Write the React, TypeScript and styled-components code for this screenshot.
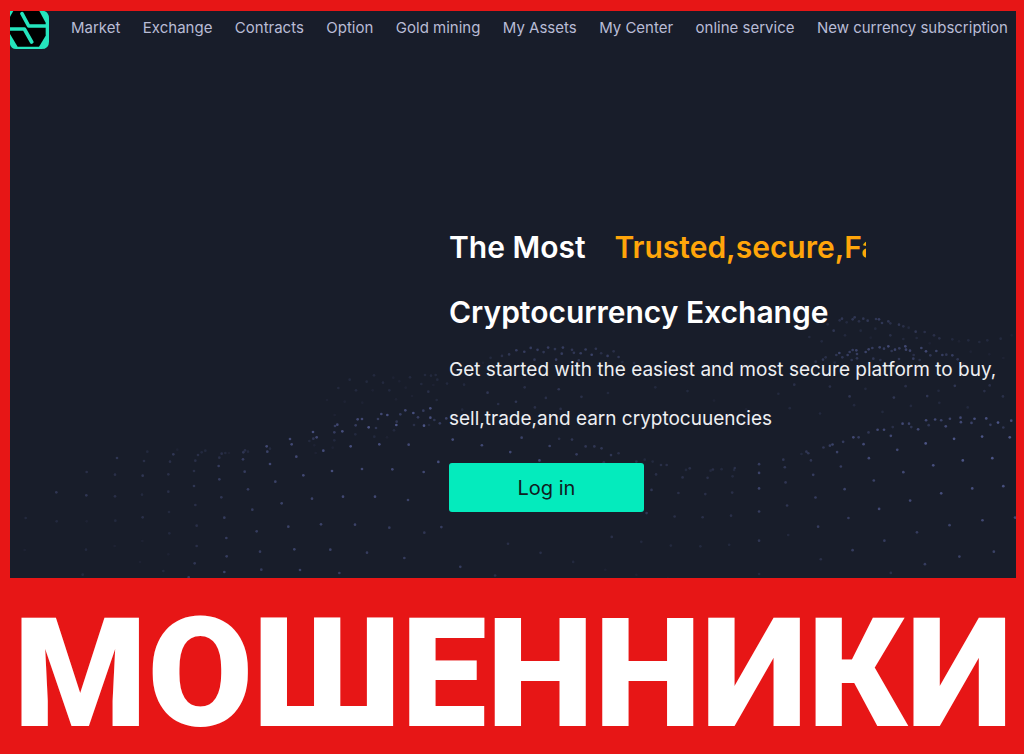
import React from "react";
import styled, { createGlobalStyle } from "styled-components";

const GlobalStyle = createGlobalStyle`
  * { box-sizing: border-box; }
  body {
    margin: 0;
    background: #e71616;
    font-family: Inter, "Noto Sans", sans-serif;
  }
`;

const Page = styled.div`
  display: flex;
  flex-direction: column;
  min-height: 100vh;
  padding: 11px 8px 0 10px;
  background: #e71616;
`;

const Screen = styled.main`
  position: relative;
  overflow: hidden;
  background: #181d2a;
  padding-bottom: 66px;
`;

const Backdrop = styled.svg`
  position: absolute;
  inset: 0;
  width: 100%;
  height: 100%;
  fill: #6670b4;
`;

const Header = styled.header`
  position: relative;
  display: flex;
  align-items: flex-start;
  gap: 22px;
  padding-right: 8px;
`;

const Logo = styled.svg`
  flex: none;
  width: 39px;
  height: 38px;
`;

const Nav = styled.nav`
  flex: 1;
  display: flex;
  justify-content: space-between;
  padding-top: 7px;
`;

const NavLink = styled.a`
  color: #b9bcd6;
  font-size: 15px;
  line-height: 20px;
  text-decoration: none;
  white-space: nowrap;
`;

const Hero = styled.section`
  position: relative;
  display: grid;
  grid-template-columns: 439fr 567fr;
  padding-top: 166px;
`;

const Copy = styled.div`
  grid-column: 2;
`;

const Title = styled.h1`
  margin: 0;
  color: #fff;
  font-size: 30px;
  font-weight: 600;
  line-height: 65px;
`;

const TitleLine = styled.span`
  display: flex;
  gap: 29px;
  white-space: nowrap;
`;

const Typed = styled.span`
  width: 252px;
  overflow: hidden;
  color: #ffa50a;
`;

const Lead = styled.p`
  margin: 0;
  color: #eeeff2;
  font-size: 19px;
  line-height: 49px;
`;

const LoginButton = styled.button`
  display: block;
  width: 195px;
  height: 49px;
  margin-top: 20px;
  border: 0;
  border-radius: 3px;
  background: #04ebbd;
  color: #10201f;
  font: 400 20px/24px Inter, sans-serif;
`;

const Banner = styled.footer`
  flex: 1;
  display: flex;
  align-items: center;
  justify-content: center;
  padding-top: 16px;
  color: #fff;
  font-family: Roboto, sans-serif;
  font-size: 153px;
  font-weight: 900;
  line-height: 152px;
  white-space: nowrap;
`;

const links = [
  "Market", "Exchange", "Contracts", "Option", "Gold mining",
  "My Assets", "My Center", "online service", "New currency subscription",
];

type Dot = [number, number, number];

// Each dot is x, y and brightness from 1 to 9, in its field's own units.
const leftDots: Dot[] = [
  [351,354,4],[442,335,2],[532,329,1],[520,343,4],[510,365,3],[432,363,3],[260,396,3],[345,404,3],[428,407,4],[505,403,3],
  [169,457,4],[259,466,4],[345,469,3],[426,464,2],[505,455,3],[77,534,2],[170,544,2],[260,544,1],[346,542,2],[428,532,3],
  [507,516,2],[508,580,2],[427,603,1],[344,618,1],[258,629,2],[74,630,1],[505,643,1],[420,666,1],[490,693,2],[248,704,2],
  [616,332,2],[605,337,2],[594,345,3],[586,362,3],[582,393,3],[582,438,4],[586,495,3],[590,557,3],[590,618,3],[584,670,4],[566,712,5],
  [665,341,3],[676,339,2],[687,339,1],[658,353,3],[656,378,5],[658,418,5],[664,472,4],[673,533,5],[679,594,5],[680,649,5],[673,696,6],
  [735,331,3],[730,337,4],[744,335,2],[729,358,5],[734,395,5],[744,448,5],[757,509,5],[770,574,5],[780,635,5],[784,689,5],
  [800,319,7],[810,326,2],[802,335,6],[810,372,7],[826,425,6],[845,490,6],[865,560,6],[883,628,6],[900,690,6],[1018,699,5],
  [870,297,7],[875,313,7],[889,350,7],[910,406,7],[936,476,6],[963,553,6],[991,629,6],
  [939,276,8],[950,292,7],[940,296,4],[970,332,8],[996,393,8],[1029,470,7],[1065,554,6],[1101,638,5],
  [1012,254,7],[1005,258,5],[1003,277,5],[1027,274,8],[1052,319,8],[1086,387,7],[1125,470,7],[1168,563,5],[1213,654,5],
  [1073,238,7],[1086,237,7],[1067,256,5],[1106,262,9],[1066,283,2],[1138,313,8],[1177,388,7],[1224,480,6],[1273,578,4],
  [1144,222,7],[1162,225,8],[1134,237,5],[1128,264,4],[1123,290,2],[1189,255,9],[1190,245,4],[1182,271,2],[1226,314,7],[1271,396,7],
  [1216,211,7],[1201,223,5],[1240,219,8],[1254,232,5],[1242,255,3],[1272,257,9],[1270,212,5],[1291,205,8],[1303,240,4],
  [1015,144,2],[1049,119,2],[1068,151,2],[1087,188,1],[1100,125,2],[1122,106,2],[1149,128,2],[1118,151,1],[1168,151,2],[1180,113,1],
  [1198,124,1],[1217,143,1],[1230,112,2],[1264,132,2],[1275,105,2],[1293,107,2],[1307,105,2],[1285,155,3],[1188,178,1],[1236,168,1],
  [1310,180,2],[1312,119,2],[1300,135,1],[981,180,1],[1034,185,1],[1004,225,1],[943,316,1],[928,303,2],[1003,301,2],[1161,292,1],[1287,255,2],[998,323,1],[947,339,1],
];

const rightDots: Dot[] = [
  [1,205,8],[43,207,6],[26,220,5],[68,205,4],[60,263,8],[137,278,7],[22,322,8],[102,336,7],[183,355,6],[212,296,7],[289,318,7],[365,341,5],[439,362,5],
  [242,258,6],[316,280,6],[387,302,5],[341,261,3],[375,263,4],[411,281,4],[434,281,4],[453,286,4],[478,304,4],[498,299,3],[459,323,3],[529,341,4],
  [545,321,3],[567,316,2],[588,321,2],[610,330,3],[625,330,3],[597,355,3],[667,363,3],[676,343,2],[686,339,3],[733,364,3],[741,345,2],[747,342,3],[770,341,2],
  [803,343,2],[805,338,3],[799,360,2],[585,396,4],[656,404,3],[727,407,3],[798,403,3],[572,457,4],[646,466,3],[720,468,3],[795,464,3],
  [480,520,3],[558,533,2],[636,543,2],[714,545,2],[790,541,2],[869,328,5],[869,351,6],[869,392,6],[869,453,5],[869,530,4],[869,618,2],
  [933,316,4],[937,336,4],[939,376,4],[943,437,4],[946,515,2],[981,301,2],[994,295,4],[999,299,4],[1006,318,4],[1012,356,5],[1018,416,5],[1025,493,5],[1032,579,3],
  [1039,284,4],[1056,279,5],[1063,276,6],[1075,296,6],[1085,334,5],[1095,394,6],[1105,470,5],[1116,555,5],[1128,640,2],
  [1091,269,5],[1118,257,7],[1132,257,5],[1145,275,7],[1159,312,7],[1172,371,6],[1186,446,7],[1200,530,5],[1217,615,3],[1238,692,3],
  [1158,244,4],[1182,237,7],[1199,237,7],[1217,253,7],[1234,290,7],[1250,349,7],[1268,424,7],[1286,508,5],[1307,592,5],[1333,669,5],
  [1222,230,3],[1248,221,7],[1265,221,6],[1271,230,4],[1289,236,7],[1309,273,9],[1329,331,8],[1350,405,8],[1372,489,6],[1398,572,6],[1430,649,5],[1471,710,5],
  [1310,212,7],[1317,225,4],[1334,210,7],[1350,212,6],[1362,228,7],[1384,261,9],[1407,318,9],[1432,392,8],[1459,476,7],[1489,559,6],[1526,634,6],
  [1373,208,6],[1401,205,7],[1402,217,7],[1438,208,8],[1430,219,6],[1469,207,8],[1458,255,9],[1485,312,9],[1514,386,8],[1545,469,7],
  [1480,224,5],[1500,218,9],[1514,231,4],[1535,213,8],[1531,257,9],[206,538,3],[292,562,3],[378,586,2],[463,607,1],[30,494,5],[80,599,5],[172,622,3],[264,647,2],[32,675,4],[130,699,3],[545,620,1],[628,630,1],
  [209,38,4],[228,27,5],[249,31,5],[266,21,5],[284,26,5],[300,32,4],[312,20,5],[330,24,4],[351,20,5],[348,36,5],[375,26,4],[380,34,4],[398,35,5],
  [411,25,5],[427,39,6],[438,23,4],[452,35,3],[469,42,5],[485,30,3],[498,45,4],[508,58,2],[539,61,2],[276,52,4],[333,52,5],[393,54,4],[190,42,3],[160,47,2],[140,60,1],
  [45,115,2],[90,118,2],[152,139,4],[180,169,3],[227,163,4],[250,125,3],[340,130,4],[306,153,3],[400,150,3],[345,182,3],[470,140,2],[595,125,2],[680,135,2],[750,160,1],[835,183,1],[920,142,2],[962,118,3],[1056,123,3],[1108,149,4],[1150,129,2],[1225,152,4],[1256,122,3],[1313,148,4],[1343,134,2],[1386,121,4],[1464,135,3],[1478,120,3],[1513,149,3],
  [85,184,2],[277,178,3],[440,192,1],[665,192,1],[868,192,1],[950,180,2],[1030,194,2],[1120,172,2],[1195,190,2],[1270,174,2],[1345,166,2],[1420,178,2],
];

const farDots: Dot[] = [
  [119,121,3],[126,116,4],[140,127,2],[158,118,4],[164,112,4],[177,124,3],[190,116,4],[203,122,4],[228,117,4],[237,118,5],[246,129,4],[265,124,4],[271,130,3],
  [297,134,4],[310,139,3],[326,143,2],[347,155,4],[374,156,3],[402,166,3],[418,175,3],[457,178,2],[477,184,1],[505,181,2],[538,186,2],[562,181,2],[602,176,2],[635,166,1],
  [83,133,2],[101,152,4],[135,166,2],[182,152,2],[226,146,2],[271,166,3],[310,177,2],[350,174,2],[212,173,1],[28,171,2],[65,184,2],[389,190,1],
  [47,245,3],[69,239,4],[77,232,3],[109,225,4],[118,219,6],[127,232,4],[143,225,5],[149,216,5],[158,210,5],[169,211,6],[171,222,5],[197,216,6],[206,208,6],[217,204,5],[239,202,6],
  [252,206,5],[265,199,7],[275,213,4],[285,209,6],[298,205,5],[316,199,7],[318,209,6],[330,212,6],[341,225,3],[340,236,5],[364,204,6],[378,214,7],[391,226,4],[409,213,6],[427,225,5],[439,224,4],[457,226,5],[473,238,4],[490,251,2],[500,260,1],
  [104,248,2],[155,240,4],[171,235,4],[220,236,4],[241,240,3],[297,237,4],[359,240,3],[512,215,1],[568,223,1],[610,234,1],
];

type FieldProps = { dots: Dot[]; x: number; y: number; scale?: number };

const DotField = ({ dots, x, y, scale = 1 }: FieldProps) => (
  <g transform={`translate(${x} ${y}) scale(${scale})`}>
    {dots.map(([cx, cy, level]) => (
      <circle key={`${cx}-${cy}`} cx={cx} cy={cy} r={4 / scale} opacity={level * 0.075} />
    ))}
  </g>
);

export default function App() {
  return (
    <>
      <GlobalStyle />
      <Page>
        <Screen>
          <Backdrop viewBox="30 33 3018 1701" preserveAspectRatio="xMidYMax slice" aria-hidden="true">
            <DotField dots={leftDots} x={0} y={1020} />
            <DotField dots={rightDots} x={1290} y={1020} scale={1.136} />
            <DotField dots={farDots} x={2400} y={840} />
          </Backdrop>
          <Header>
            <Logo viewBox="0 0 117 114" role="img" aria-label="Exchange logo">
              <path d="M0 0H103Q117 5 117 22V92Q117 114 94 114H18Q3 114 0 100Z" fill="#25e5bd" />
              <path d="M10 0H88L107 35V74L87 107H23L0 69V17Z" fill="#000" />
              <path d="M36 8L56 45H110M0 54H43L65 93" fill="none" stroke="#25e5bd" strokeWidth="11" strokeLinecap="round" strokeLinejoin="round" />
            </Logo>
            <Nav>
              {links.map((label) => (
                <NavLink href="#" key={label}>{label}</NavLink>
              ))}
            </Nav>
          </Header>
          <Hero>
            <Copy>
              <Title>
                <TitleLine>
                  <span>The Most</span>
                  <Typed>Trusted,secure,Fast</Typed>
                </TitleLine>
                <TitleLine>Cryptocurrency Exchange</TitleLine>
              </Title>
              <Lead>
                Get started with the easiest and most secure platform to buy,
                <br />
                sell,trade,and earn cryptocuuencies
              </Lead>
              <LoginButton type="button">Log in</LoginButton>
            </Copy>
          </Hero>
        </Screen>
        <Banner>МОШЕННИКИ</Banner>
      </Page>
    </>
  );
}
